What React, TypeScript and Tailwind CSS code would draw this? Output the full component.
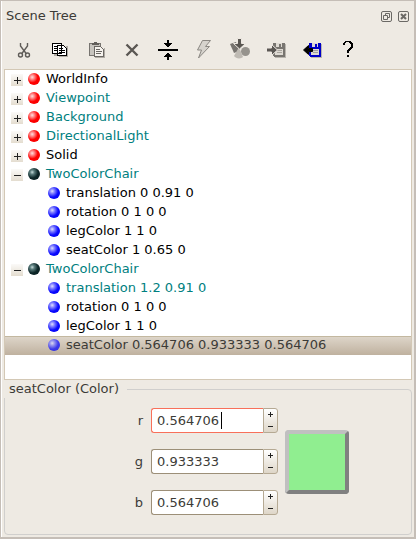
import React, { useState } from "react";

type Row = { text: string; kind: "red" | "dark" | "blue"; sign?: "+" | "-"; teal?: boolean; selected?: boolean };

const rows: Row[] = [
  { text: "WorldInfo", kind: "red", sign: "+" },
  { text: "Viewpoint", kind: "red", sign: "+", teal: true },
  { text: "Background", kind: "red", sign: "+", teal: true },
  { text: "DirectionalLight", kind: "red", sign: "+", teal: true },
  { text: "Solid", kind: "red", sign: "+" },
  { text: "TwoColorChair", kind: "dark", sign: "-", teal: true },
  { text: "translation 0 0.91 0", kind: "blue" },
  { text: "rotation 0 1 0 0", kind: "blue" },
  { text: "legColor 1 1 0", kind: "blue" },
  { text: "seatColor 1 0.65 0", kind: "blue" },
  { text: "TwoColorChair", kind: "dark", sign: "-", teal: true },
  { text: "translation 1.2 0.91 0", kind: "blue", teal: true },
  { text: "rotation 0 1 0 0", kind: "blue" },
  { text: "legColor 1 1 0", kind: "blue" },
  { text: "seatColor 0.564706 0.933333 0.564706", kind: "blue", selected: true },
];

const balls = {
  red: "bg-[radial-gradient(circle_at_35%_35%,#ffe0e0_0%,#ff8080_22%,#ff0000_50%,#f00000_100%)]",
  dark: "bg-[radial-gradient(circle_at_35%_35%,#c8dcdc_0%,#5a7c7c_20%,#0c2628_52%,#061a1c_100%)]",
  blue: "bg-[radial-gradient(circle_at_35%_35%,#e0e0ff_0%,#8080ff_22%,#0a0aff_54%,#0000e8_100%)]",
};

function Icon({ children }: { children: React.ReactNode }) {
  return (
    <svg width="24" height="24" viewBox="0 0 24 24" shapeRendering="crispEdges" aria-hidden="true">
      {children}
    </svg>
  );
}

function Disk({ shell, page, lines }: { shell: string; page: string; lines: string }) {
  return (
    <>
      <path d="M10 6h12v14h-11v-1h-1z" fill="#b9b5ae" />
      <path d="M9 5h12v14h-11v-1h-1z" fill={shell} />
      <path d="M12 5h6v4h-6z" fill={page} />
      <path d="M15 6h2v3h-2z" fill={shell} />
      <path d="M11 11h8v6h-8z" fill={page} />
      <path d="M13 12.500h5M13 14.500h5" stroke={lines} />
    </>
  );
}

const tools: { name: string; art: React.ReactNode }[] = [
  {
    name: "Cut",
    art: (
      <g fill="none" stroke="#5f5c58" strokeWidth="1.4" shapeRendering="auto">
        <path d="M8.500 5v3l6 8M15.500 5v3l-6 8" />
        <circle cx="8.500" cy="17" r="2" />
        <circle cx="15.500" cy="17" r="2" />
      </g>
    ),
  },
  {
    name: "Copy",
    art: (
      <>
        <path d="M6 16h12v3H11v-1H6zM18 8h2v11h-2z" fill="#b0aca5" />
        <path d="M4.500 5.500h9v10h-9zM9.500 7.500h6l3 3v7h-9z" fill="#fff" stroke="#000" />
        <path d="M6 8.500h3M6 10.500h3M6 12.500h3M11 10.500h4M11 12.500h6M11 14.500h6" stroke="#000" />
      </>
    ),
  },
  {
    name: "Paste",
    art: (
      <>
        <path d="M11 20h10V10h-1v9H11z" fill="#b0aca5" />
        <path d="M5.500 5.500h11v12h-11z" fill="#c7c4be" stroke="#777470" />
        <path d="M8 5h2V4h3v1h2v2H8z" fill="#625f5b" />
        <path d="M10.500 8.500h6l3 3v7h-9z" fill="#f6f3ee" stroke="#6b6864" />
        <path d="M12 11.500h4M12 13.500h6M12 15.500h5" stroke="#6b6864" />
      </>
    ),
  },
  { name: "Delete", art: <path d="M6.500 6.500l11 11M17.500 6.500l-11 11" stroke="#5a5753" strokeWidth="2.4" shapeRendering="auto" /> },
  {
    name: "Collapse",
    art: <path d="M2 11h20v2H2zM11 2h2v3h3v1h-1v1h-1v1h-1v1h-2V8h-1V7H9V6H8V5h3zM11 15h2v1h1v1h1v1h1v1h-3v3h-2v-3H8v-1h1v-1h1v-1h1z" fill="#000" />,
  },
  {
    name: "Reset",
    art: <path d="M10.500 2.500h8l-5 6h4L6.500 20l3-8h-4z" fill="#d6d3cd" stroke="#8b8883" shapeRendering="auto" />,
  },
  {
    name: "Add",
    art: (
      <g shapeRendering="auto">
        <path d="M2 6l6-2 3 9-5 2z" fill="#77746f" />
        <circle cx="17.500" cy="13.500" r="4.500" fill="#96938d" />
        <path d="M11 9l4 10c-2 2-7 2-9-1z" fill="#bebab3" />
        <path d="M9.500 .5h4v5h4L11.500 11l-6-5.500h4z" fill="#595651" stroke="#eee9e2" />
      </g>
    ),
  },
  {
    name: "Import",
    art: (
      <>
        <Disk shell="#787570" page="#dedad3" lines="#aaa69f" />
        <path d="M2.500 10h5V6.500l6 5.500-6 5.500V14h-5z" fill="#5a5753" stroke="#efeae4" shapeRendering="auto" />
      </>
    ),
  },
  {
    name: "Export",
    art: (
      <>
        <Disk shell="#0000c8" page="#dedad3" lines="#a0a0a0" />
        <path d="M12.500 10.500h-4V7.500L3.500 12l5 4.500v-3h4z" fill="#000" stroke="#000" shapeRendering="auto" />
      </>
    ),
  },
  {
    name: "Help",
    art: <path d="M7 7V5h1V4h1V3h6v1h1v1h1v5h-1v1h-1v1h-1v1h-1v2h-2v-3h1v-1h1v-1h1V9h1V6h-1V5h-1V4h-3v1H9v2zM11 17h2v2h-2z" fill="#000" />,
  },
];

function SpinBox({ name, initial, active }: { name: string; initial: string; active?: boolean }) {
  const [value, setValue] = useState(initial);
  const step = (d: number) => setValue(String(Number((Number(value) + d).toFixed(6))));
  return (
    <div className="flex items-center gap-2">
      <label htmlFor={name} className="w-3 pb-px text-right">{name}</label>
      <div className="relative flex h-[25px] w-[127px]">
        <input
          id={name}
          value={value}
          onChange={(e) => setValue(e.target.value)}
          className={`min-w-0 flex-1 rounded-l-[3px] border border-r-0 bg-white pl-[5px] outline-none ${active ? "border-[#f8705a]" : "border-[#9c8f78]"}`}
        />
        {active && <span className="absolute top-[4px] left-[70px] h-[17px] w-px bg-black" />}
        <div className="flex w-[15px] flex-col rounded-r-[3px] border border-[#b5a993] bg-linear-to-b from-white to-[#ded6c8]">
          {[1, -1].map((d) => (
            <button key={d} type="button" aria-label={d > 0 ? `Increase ${name}` : `Decrease ${name}`} onClick={() => step(d * 0.1)} className="flex flex-1 items-center justify-center">
              <svg width="5" height="5" viewBox="0 0 5 5" shapeRendering="crispEdges">
                <path d={d > 0 ? "M0 2h5v1H0zM2 0h1v5H2z" : "M0 2h5v1H0z"} fill="#222" />
              </svg>
            </button>
          ))}
        </div>
      </div>
    </div>
  );
}

export default function App() {
  return (
    <div className="flex flex-col border-t border-r-2 border-b-2 border-l border-[#c5beb7] bg-[#eeeae3] font-['DejaVu_Sans',sans-serif] text-[13px] leading-[19px] text-[#3c3b37]">
      <div className="flex flex-col border-l border-white pr-[2px] pb-[2px] pl-[2px]">
        <header className="flex h-[30px] items-center justify-between pr-[3px] pl-[2px]">
          <h1 className="pb-px">Scene Tree</h1>
          <div className="flex gap-[6px]">
            <button type="button" aria-label="Float">
              <svg width="11" height="11" viewBox="0 0 11 11" fill="none" stroke="#6b6965">
                <rect x=".5" y=".5" width="10" height="10" rx="1.500" />
                <path d="M4.500 4.500v-2h4v4h-2M2.500 4.500h4v4h-4z" />
              </svg>
            </button>
            <button type="button" aria-label="Close">
              <svg width="11" height="11" viewBox="0 0 11 11" fill="none" stroke="#6b6965">
                <rect x=".5" y=".5" width="10" height="10" rx="1.500" />
                <path d="M3 3l5 5M8 3L3 8" strokeWidth="2" />
              </svg>
            </button>
          </div>
        </header>
        <div role="toolbar" className="flex h-[38px] items-center gap-3 px-2">
          {tools.map((t) => (
            <button key={t.name} type="button" aria-label={t.name}>
              <Icon>{t.art}</Icon>
            </button>
          ))}
        </div>
        <ul className="border border-[#d3c8b5] bg-white pb-[24px]">
          {rows.map((r, i) => (
            <li
              key={i}
              className={`flex h-[19px] items-center ${r.sign ? "pl-[6px]" : "pl-[43px]"} ${r.selected ? "bg-linear-to-b from-[#dfd7cb] to-[#bfb19f] text-[#3c3b37] shadow-[inset_0_1px_0_#c3b8a0]" : r.teal ? "text-[#008080]" : "text-black"}`}
            >
              {r.sign && (
                <button type="button" aria-label={r.sign === "+" ? "Expand" : "Collapse"} className="mr-[5px] flex size-3 items-center justify-center bg-linear-to-b from-[#fbfaf8] to-[#e4ddd0]">
                  <svg width="12" height="12" viewBox="0 0 12 12" shapeRendering="crispEdges">
                    <path d={r.sign === "+" ? "M3 6h7v1H3zM6 3h1v7H6z" : "M3 6h7v1H3z"} fill="#222" />
                  </svg>
                </button>
              )}
              <span className={`mr-[6px] mb-px size-3 rounded-full ${balls[r.kind]} ${r.selected ? "opacity-75" : ""}`} />
              <span className="pb-[2px]">{r.text}</span>
            </li>
          ))}
        </ul>
        <fieldset className="rounded-[4px] border border-[#d0cfcd] pb-[19px] pl-[126px]">
          <legend className="-ml-[127px] bg-[#eeeae3] pr-2 pl-[5px] leading-[18px]">seatColor (Color)</legend>
          <div className="flex items-center gap-[7px] pt-[10px]">
            <div className="flex flex-col gap-4">
              <SpinBox name="r" initial="0.564706" active />
              <SpinBox name="g" initial="0.933333" />
              <SpinBox name="b" initial="0.564706" />
            </div>
            <button type="button" aria-label="Pick color" className="size-16 rounded-[4px] border-4 border-t-[#c0c0c0] border-r-[#808080] border-b-[#808080] border-l-[#c0c0c0] bg-[#90ee90]" />
          </div>
        </fieldset>
      </div>
    </div>
  );
}
